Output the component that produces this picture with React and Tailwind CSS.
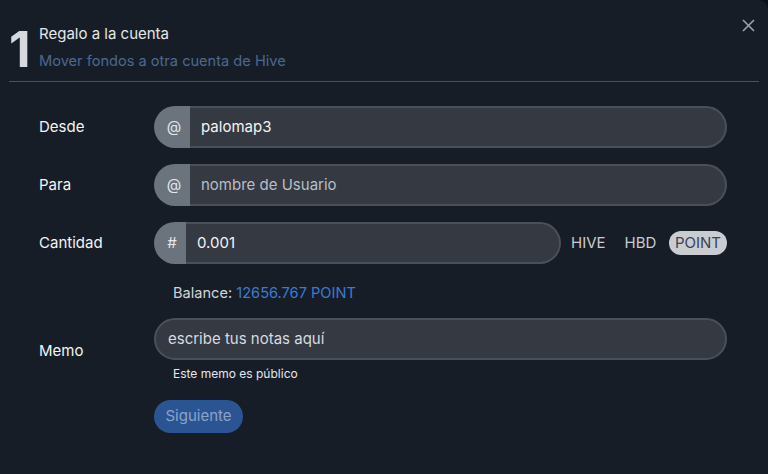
import React, { useState } from 'react';

const font = { fontFamily: 'Inter, "Liberation Sans", sans-serif' };

const Prepend = ({ children }) => (
  <span className="flex w-[36px] shrink-0 items-center justify-center rounded-l-full bg-[#6b737d] pl-1 text-[15px] text-[#e5e7eb]">
    {children}
  </span>
);

const Row = ({ label, children }) => (
  <div className="flex items-center">
    <label className="w-[115px] shrink-0 text-[15px] text-[#f3f4f6]">{label}</label>
    {children}
  </div>
);

export default function App() {
  const [asset, setAsset] = useState('POINT');

  return (
    <div className="h-[474px] w-[768px] overflow-hidden bg-[#0e1116]" style={font}>
      <div className="relative h-full w-full rounded-tr-[10px] bg-[#171d27]">
        {/* Header */}
        <div className="mx-[9px] flex h-[82px] items-start border-b border-[#3d5272] pt-[24px]">
          <span className="w-[30px] text-[50px] font-bold leading-[50px] text-[#d6d9de]">1</span>
          <div className="flex flex-col">
            <span className="text-[15px] leading-[20px] text-[#e5e7eb]">Regalo a la cuenta</span>
            <span className="mt-[7px] text-[14.6px] leading-[20px] text-[#4b6891]">Mover fondos a otra cuenta de Hive</span>
          </div>
        </div>
        <button className="absolute right-[13px] top-[19px] text-[#9ca3af]">
          <svg width="13" height="13" viewBox="0 0 13 13" stroke="currentColor" strokeWidth="1.6">
            <path d="M1 1L12 12M12 1L1 12" />
          </svg>
        </button>

        {/* Form */}
        <div className="flex flex-col pl-[39px] pr-[41px] pt-[24px]">
          <div className="flex flex-col gap-[16px]">
            <Row label="Desde">
              <div className="flex h-[42px] flex-1">
                <Prepend>@</Prepend>
                <div className="flex flex-1 items-center rounded-r-full border-2 border-l-0 border-[#4b5058] bg-[#353942] pl-[11px] text-[15px] text-[#f3f4f6]">
                  palomap3
                </div>
              </div>
            </Row>
            <Row label="Para">
              <div className="flex h-[42px] flex-1">
                <Prepend>@</Prepend>
                <div className="flex flex-1 items-center rounded-r-full border-2 border-l-0 border-[#4b5058] bg-[#353942] pl-[11px] text-[15px] text-[#b9bec6]">
                  nombre de Usuario
                </div>
              </div>
            </Row>
            <Row label="Cantidad">
              <div className="flex h-[42px] w-[407px]">
                <span className="flex w-[32px] shrink-0 items-center justify-center rounded-l-full bg-[#6b737d] pl-1 text-[15px] text-[#e5e7eb]">#</span>
                <div className="flex flex-1 items-center rounded-r-full border-2 border-l-0 border-[#4b5058] bg-[#353942] pl-[11px] text-[15px] text-[#f3f4f6]">
                  0.001
                </div>
              </div>
              <div className="ml-[8px] flex flex-1 items-center text-[15px]">
                {['HIVE', 'HBD', 'POINT'].map((a, i) => (
                  <span
                    key={a}
                    onClick={() => setAsset(a)}
                    className={
                      (i === 1 ? 'ml-[15px] ' : i === 2 ? 'ml-auto ' : '') +
                      (asset === a
                        ? 'cursor-pointer rounded-full bg-[#c9ccd1] px-[6px] py-[1px] text-[#3b4250]'
                        : 'cursor-pointer px-[2px] text-[#c9ccd1]')
                    }
                  >
                    {a}
                  </span>
                ))}
              </div>
            </Row>
          </div>

          <div className="ml-[134px] mt-[19px] text-[14.6px] text-[#d1d5db]">
            Balance: <span className="text-[#3a7bd5]">12656.767 POINT</span>
          </div>

          <div className="mt-[13px] flex items-center">
            <label className="w-[115px] shrink-0 pt-[2px] text-[15px] text-[#f3f4f6]">Memo</label>
            <div className="flex flex-1 flex-col">
              <div className="flex h-[42px] items-center rounded-full border-2 border-[#4b5058] bg-[#353942] pl-[12px] text-[15px] text-[#d7dbe0]">
                escribe tus notas aquí
              </div>
              <span className="ml-[19px] mt-[6px] text-[12px] leading-[16px] text-[#e5e7eb]">Este memo es público</span>
            </div>
          </div>

          <div className="ml-[115px] mt-[18px]">
            <button className="h-[33px] w-[89px] rounded-full bg-[#2b5493] text-[15px] text-[#8ca3c9]">Siguiente</button>
          </div>
        </div>
      </div>
    </div>
  );
}
